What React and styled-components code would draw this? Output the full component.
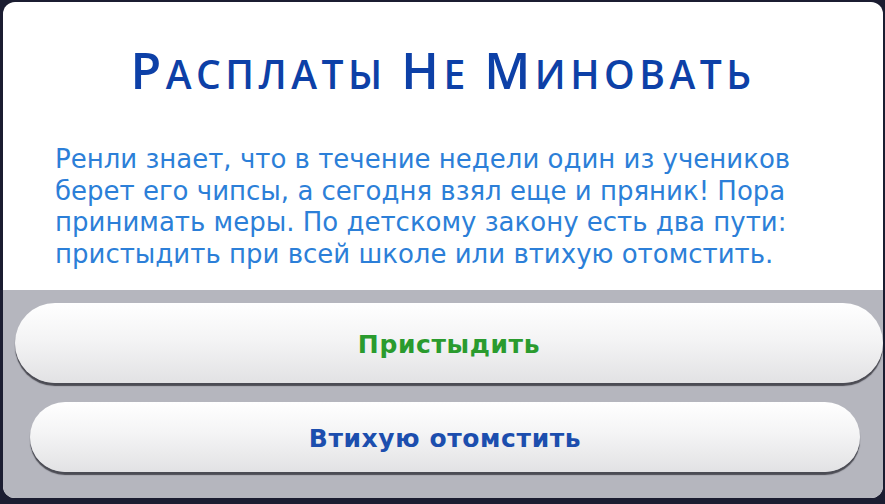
import React from 'react';
import styled, { createGlobalStyle } from 'styled-components';

const GlobalStyle = createGlobalStyle`
  html, body {
    margin: 0;
    padding: 0;
    background: #1b1d31;
  }
  body {
    width: 885px;
    height: 504px;
    overflow: hidden;
  }
`;

const Dialog = styled.div`
  margin: 2px 2px 0 3px;
  width: 880px;
  height: 496px;
  border-radius: 12px;
  overflow: hidden;
  display: flex;
  flex-direction: column;
  background: #ffffff;
`;

const Header = styled.div`
  height: 288px;
  padding: 40px 10px 0 52px;
  box-sizing: border-box;
`;

const Title = styled.h1`
  margin: 0 0 0 -42px;
  text-align: center;
  font-family: "Open Sans", "Liberation Sans", sans-serif;
  font-weight: 600;
  font-size: 39px;
  line-height: 56px;
  color: #0d40a7;
  letter-spacing: 4.5px;
`;

const Initial = styled.span`
  font-size: 50px;
`;

const Story = styled.p`
  margin: 42px 0 0;
  font-family: "DejaVu Sans", "Open Sans", sans-serif;
  font-size: 26px;
  line-height: 31.5px;
  color: #2c7fd8;
`;

const Choices = styled.div`
  flex: 1;
  background: #b5b6be;
  padding: 13px 0 0 12px;
  display: flex;
  flex-direction: column;
  align-items: flex-start;
  gap: 19px;
`;

const Choice = styled.button`
  width: ${p => p.$width}px;
  height: ${p => p.$height}px;
  margin-left: ${p => p.$indent || 0}px;
  border: none;
  border-radius: ${p => p.$height / 2}px;
  background: linear-gradient(#ffffff 0%, #f4f4f5 45%, #e2e2e4 100%);
  box-shadow: 0 3px 1px rgba(40, 40, 48, 0.75);
  font-family: "DejaVu Sans", "Open Sans", sans-serif;
  font-weight: 700;
  font-size: 25px;
  letter-spacing: 0.6px;
  color: ${p => p.$color};
  cursor: pointer;
  padding: 3px 0 0;
`;

export default function App() {
  return (
    <>
      <GlobalStyle />
      <Dialog>
        <Header>
          <Title>
            <Initial>Р</Initial>АСПЛАТЫ <Initial>Н</Initial>Е <Initial>М</Initial>ИНОВАТЬ
          </Title>
          <Story>
            Ренли знает, что в течение недели один из учеников<br />
            берет его чипсы, а сегодня взял еще и пряник! Пора<br />
            принимать меры. По детскому закону есть два пути:<br />
            пристыдить при всей школе или втихую отомстить.
          </Story>
        </Header>
        <Choices>
          <Choice $width={868} $height={80} $color="#2a9b2e">Пристыдить</Choice>
          <Choice $width={830} $height={70} $indent={15} $color="#1c4eae">Втихую отомстить</Choice>
        </Choices>
      </Dialog>
    </>
  );
}
